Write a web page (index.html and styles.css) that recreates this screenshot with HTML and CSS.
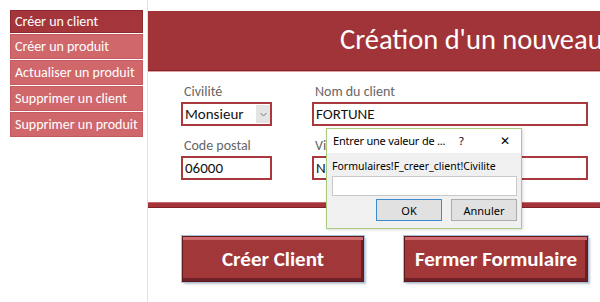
FILE: index.html
```html
<!DOCTYPE html>
<html lang="fr">
<head>
  <meta charset="UTF-8">
  <title>Création d'un nouveau client</title>
  <link rel="stylesheet" href="styles.css">
</head>
<body>
  <div class="app">
    <nav class="menu">
      <a class="menu-item active">Créer un client</a>
      <a class="menu-item">Créer un produit</a>
      <a class="menu-item">Actualiser un produit</a>
      <a class="menu-item">Supprimer un client</a>
      <a class="menu-item">Supprimer un produit</a>
    </nav>

    <main class="form-panel">
      <header class="form-header">
        <h1>Création d'un nouveau client</h1>
      </header>

      <div class="fields">
        <div class="field small">
          <label>Civilité</label>
          <div class="box select">
            <span>Monsieur</span>
            <span class="drop">
              <svg width="7" height="5" viewBox="0 0 7 5"><path d="M0.5 1 L3.5 4 L6.5 1" fill="none" stroke="#777" stroke-width="1"/></svg>
            </span>
          </div>
        </div>
        <div class="field wide">
          <label>Nom du client</label>
          <div class="box">FORTUNE</div>
        </div>
        <div class="field small">
          <label>Code postal</label>
          <div class="box">06000</div>
        </div>
        <div class="field wide">
          <label>Ville</label>
          <div class="box">Nice</div>
        </div>
      </div>

      <div class="separator"></div>

      <div class="actions">
        <button class="big-btn btn-create">Créer Client</button>
        <button class="big-btn btn-close">Fermer Formulaire</button>
      </div>
    </main>
  </div>

  <!-- Boîte de dialogue de paramètre -->
  <div class="dialog">
    <div class="dialog-title">
      <span class="dialog-name">Entrer une valeur de ...</span>
      <span class="dialog-help">?</span>
      <span class="dialog-close">✕</span>
    </div>
    <div class="dialog-body">
      <div class="dialog-label">Formulaires!F_creer_client!Civilite</div>
      <div class="dialog-input"></div>
      <div class="dialog-buttons">
        <button class="dlg-btn ok">OK</button>
        <button class="dlg-btn">Annuler</button>
      </div>
    </div>
  </div>
</body>
</html>
```

FILE: styles.css
```css
/* Reset */
* {
  margin: 0;
  padding: 0;
  box-sizing: border-box;
}

body {
  width: 600px;
  height: 302px;
  overflow: hidden;
  background-color: #fff;
  font-family: Carlito, Lato, "Open Sans", sans-serif;
  position: relative;
}

.app {
  display: flex;
  height: 302px;
}

/* Side menu */
.menu {
  display: flex;
  flex-direction: column;
  gap: 1px;
  width: 143px;
  padding: 10px 0 0 10px;
}

.menu-item {
  display: block;
  height: 25px;
  line-height: 24px;
  padding-left: 4px;
  color: #fff;
  font-size: 14px;
  background-color: #d0676b;
  border: 1px solid #c45a5e;
  white-space: nowrap;
}

.menu-item.active {
  background-color: #a4363b;
  border-color: #8c2a2f;
  height: 23px;
  line-height: 21px;
}

/* Main panel */
.form-panel {
  flex: 1;
  margin-left: 4px;
  border-left: 1px solid #e2e2e2;
  overflow: hidden;
}

.form-header {
  margin-top: 11px;
  height: 60px;
  background-color: #a13438;
  border-bottom: 1px solid #8a2227;
  box-shadow: 0 1px 0 #dba3a5;
  overflow: hidden;
}

.form-header h1 {
  padding-left: 192px;
  color: #fff;
  font-weight: normal;
  font-size: 28.5px;
  line-height: 58px;
  white-space: nowrap;
}

/* Fields */
.fields {
  display: grid;
  grid-template-columns: 91px 276px;
  column-gap: 40px;
  row-gap: 11px;
  padding: 12px 0 0 33px;
}

.field label {
  display: block;
  height: 18px;
  color: #666;
  font-size: 14px;
  padding-left: 3px;
  margin-bottom: 1px;
}

.box {
  height: 24px;
  border: 2px solid #a9393d;
  padding-left: 2px;
  font-size: 15px;
  line-height: 20px;
  color: #111;
  white-space: nowrap;
  overflow: hidden;
}

.select {
  display: flex;
  justify-content: space-between;
}

.drop {
  display: flex;
  align-items: center;
  justify-content: center;
  width: 14px;
  margin: 1px 0;
  background-color: #e4e4e4;
}

.separator {
  margin-top: 22px;
  height: 6px;
  background-color: #a5353a;
  border-top: 1px solid #c86a6d;
  border-bottom: 1px solid #7f2126;
}

/* Big buttons */
.actions {
  display: flex;
  gap: 40px;
  padding: 28px 0 0 34px;
}

.big-btn {
  height: 46px;
  color: #fff;
  font-family: Carlito, Lato, "Open Sans", sans-serif;
  font-weight: bold;
  font-size: 21px;
  background-color: #a2373a;
  border: 1px solid #5e1a1d;
  box-shadow: inset 0 3px 0 #d06a6d, inset -2px -3px 0 #6e2024,
              0 0 0 1px #a9c1dc, 2px 2px 2px rgba(0, 0, 0, 0.25);
}

.btn-create {
  width: 182px;
}

.btn-close {
  width: 184px;
}

/* Parameter dialog */
.dialog {
  position: absolute;
  left: 326px;
  top: 128px;
  width: 196px;
  height: 101px;
  border: 1px solid #a8cc7e;
  background-color: #f0f0f0;
  font-family: "Noto Sans", "Open Sans", sans-serif;
  box-shadow: 1px 1px 3px rgba(0, 0, 0, 0.15);
}

.dialog-title {
  display: flex;
  align-items: center;
  height: 24px;
  background-color: #fff;
  font-size: 11px;
  line-height: 14px;
  color: #000;
  padding-left: 6px;
}

.dialog-name {
  width: 126px;
  white-space: nowrap;
  letter-spacing: -0.2px;
}

.dialog-help {
  width: 41px;
}

.dialog-close {
  font-size: 12px;
}

.dialog-body {
  padding: 7px 4px 0 5px;
}

.dialog-label {
  font-size: 10.5px;
  height: 15px;
  line-height: 13px;
  white-space: nowrap;
}

.dialog-input {
  height: 20px;
  margin-top: 1px;
  background-color: #fff;
  border: 1px solid #c8c8c8;
}

.dialog-buttons {
  display: flex;
  justify-content: flex-end;
  gap: 9px;
  margin-top: 3px;
}

.dlg-btn {
  width: 66px;
  height: 22px;
  font-family: "Noto Sans", "Open Sans", sans-serif;
  font-size: 11px;
  color: #000;
  background-color: #e1e1e1;
  border: 1px solid #adadad;
}

.dlg-btn.ok {
  border: 1px solid #3c8ad0;
}
```
